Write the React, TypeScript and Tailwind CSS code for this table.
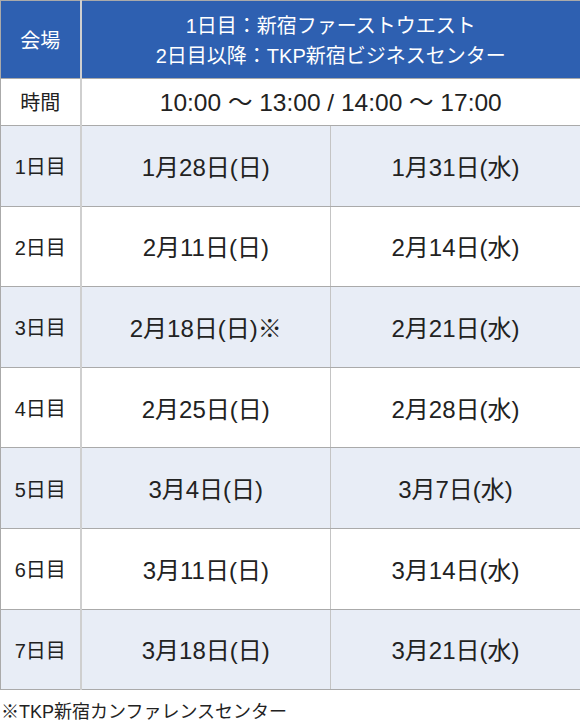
import React from "react";

const rows = [
  { label: "1日目", a: "1月28日(日)", b: "1月31日(水)", shade: true },
  { label: "2日目", a: "2月11日(日)", b: "2月14日(水)", shade: false },
  { label: "3日目", a: "2月18日(日)※", b: "2月21日(水)", shade: true },
  { label: "4日目", a: "2月25日(日)", b: "2月28日(水)", shade: false },
  { label: "5日目", a: "3月4日(日)", b: "3月7日(水)", shade: true },
  { label: "6日目", a: "3月11日(日)", b: "3月14日(水)", shade: false },
  { label: "7日目", a: "3月18日(日)", b: "3月21日(水)", shade: true },
];

export default function App() {
  return (
    <div
      className="w-[580px] bg-white text-[#222]"
      style={{ fontFamily: '"Liberation Sans", "Noto Sans CJK JP", sans-serif' }}
    >
      <table className="w-[580px] border-collapse table-fixed">
        <colgroup>
          <col className="w-[80px]" />
          <col className="w-[250px]" />
          <col className="w-[250px]" />
        </colgroup>
        <tbody>
          <tr className="h-[78px] bg-[#2e60b1] text-white">
            <td className="border border-[#aaaaaa] border-r-2 border-r-[#cfcfcf] text-center text-[20px] pt-[3px]">
              会場
            </td>
            <td
              colSpan={2}
              className="border border-[#aaaaaa] text-center text-[20px] leading-[30px] pt-[3px]"
            >
              1日目：新宿ファーストウエスト
              <br />
              2日目以降：TKP新宿ビジネスセンター
            </td>
          </tr>
          <tr className="h-[47px] bg-white">
            <td className="border border-[#aaaaaa] border-r-2 border-r-[#cfcfcf] text-center text-[20px] pt-[2px]">
              時間
            </td>
            <td colSpan={2} className="border border-[#aaaaaa] text-center text-[24.5px] pt-[2px]">
              10:00 〜 13:00 / 14:00 〜 17:00
            </td>
          </tr>
          {rows.map((r) => (
            <tr
              key={r.label}
              className={`h-[80.6px] ${r.shade ? "bg-[#e8edf6]" : "bg-white"}`}
            >
              <td className="border border-[#aaaaaa] border-r-2 border-r-[#cfcfcf] text-center text-[20px] pt-[3px]">
                {r.label}
              </td>
              <td className="border border-[#aaaaaa] border-r-[#c4c4c4] text-center text-[24px] pt-[4px]">
                {r.a}
              </td>
              <td className="border border-[#aaaaaa] text-center text-[24px] pt-[4px]">
                {r.b}
              </td>
            </tr>
          ))}
        </tbody>
      </table>
      <p className="mt-[9px] text-[18px] leading-[26px] pl-[1px]">
        ※TKP新宿カンファレンスセンター
      </p>
    </div>
  );
}
